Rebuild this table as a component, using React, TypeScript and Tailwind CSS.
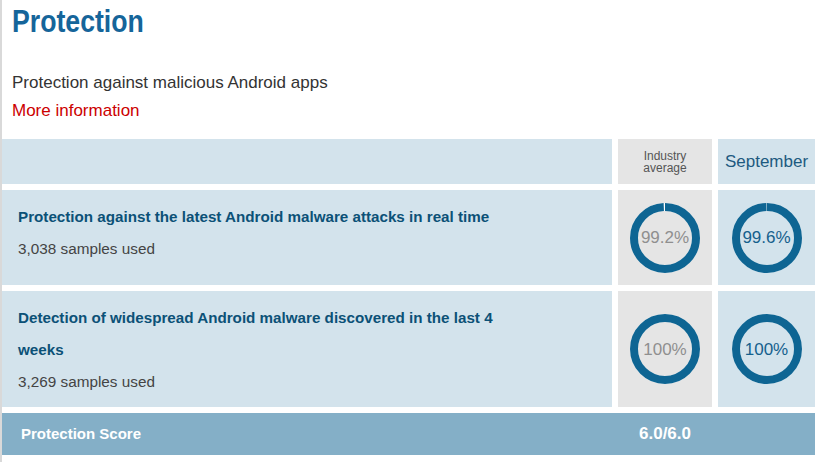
import React from 'react';

type Metric = {
  title: string;
  samples: string;
  industry: number;
  month: number;
};

const METRICS: Metric[] = [
  {
    title: 'Protection against the latest Android malware attacks in real time',
    samples: '3,038 samples used',
    industry: 99.2,
    month: 99.6,
  },
  {
    title: 'Detection of widespread Android malware discovered in the last 4 weeks',
    samples: '3,269 samples used',
    industry: 100,
    month: 100,
  },
];

function Donut({ value, muted }: { value: number; muted?: boolean }) {
  const r = 31;
  const c = 2 * Math.PI * r;
  const filled = (value / 100) * c;
  const label = value === 100 ? '100%' : `${value.toFixed(1)}%`;
  return (
    <div className="relative w-[70px] h-[70px]">
      <svg width="70" height="70" viewBox="0 0 70 70" className="absolute inset-0">
        <circle cx="35" cy="35" r={r} fill="none" stroke="#ffffff" strokeWidth="8" />
        <circle
          cx="35"
          cy="35"
          r={r}
          fill="none"
          stroke="#0e6593"
          strokeWidth="8"
          strokeDasharray={`${filled} ${c}`}
          transform="rotate(-90 35 35)"
        />
      </svg>
      <div
        className={`absolute inset-0 flex items-center justify-center text-[17px] leading-none ${
          muted ? 'text-[#8f8f8f]' : 'text-[#15608c]'
        }`}
      >
        {label}
      </div>
    </div>
  );
}

export default function App() {
  return (
    <div className="w-[819px] h-[462px] bg-white border-l-2 border-[#d9d9d9] font-['Liberation_Sans',Arial,sans-serif] overflow-hidden">
      {/* Heading */}
      <div className="pl-[10px] pt-[6px]">
        <h1 className="font-bold text-[31px] leading-[31px] text-[#15659a] origin-left scale-x-[0.86]">
          Protection
        </h1>
        <p className="mt-[32px] text-[17px] leading-[28px] text-[#333333]">
          Protection against malicious Android apps
        </p>
        <p className="text-[17px] leading-[28px] text-[#cc0000]">More information</p>
      </div>

      {/* Table */}
      <div className="mt-[14px] w-[813px] flex flex-col gap-[6px]">
        <div className="flex gap-[6px] h-[45px]">
          <div className="w-[610px] bg-[#d3e3ec]" />
          <div className="w-[94px] bg-[#e5e5e5] flex items-center justify-center text-center text-[12px] leading-[12px] text-[#555555]">
            <span>
              Industry
              <br />
              average
            </span>
          </div>
          <div className="w-[97px] bg-[#d3e3ec] flex items-center justify-center text-[17px] text-[#1d5a80]">
            September
          </div>
        </div>

        {METRICS.map((m) => (
          <div key={m.title} className="flex gap-[6px] min-h-[95px]">
            <div className="w-[610px] bg-[#d3e3ec] pl-[16px] pr-[94px] pt-[11px] pb-[9px]">
              <div className="text-[15.2px] leading-[32px] font-bold text-[#0b5177]">{m.title}</div>
              <div className="text-[15.3px] leading-[32px] text-[#444444]">{m.samples}</div>
            </div>
            <div className="w-[94px] bg-[#e5e5e5] flex items-center justify-center py-[12px]">
              <Donut value={m.industry} muted />
            </div>
            <div className="w-[97px] bg-[#d3e3ec] flex items-center justify-center py-[12px]">
              <Donut value={m.month} />
            </div>
          </div>
        ))}

        <div className="flex h-[42px] bg-[#84afc7] items-center text-white font-bold">
          <div className="w-[616px] pl-[19px] text-[15px]">Protection Score</div>
          <div className="w-[94px] text-center text-[17px]">6.0/6.0</div>
        </div>
      </div>
    </div>
  );
}
